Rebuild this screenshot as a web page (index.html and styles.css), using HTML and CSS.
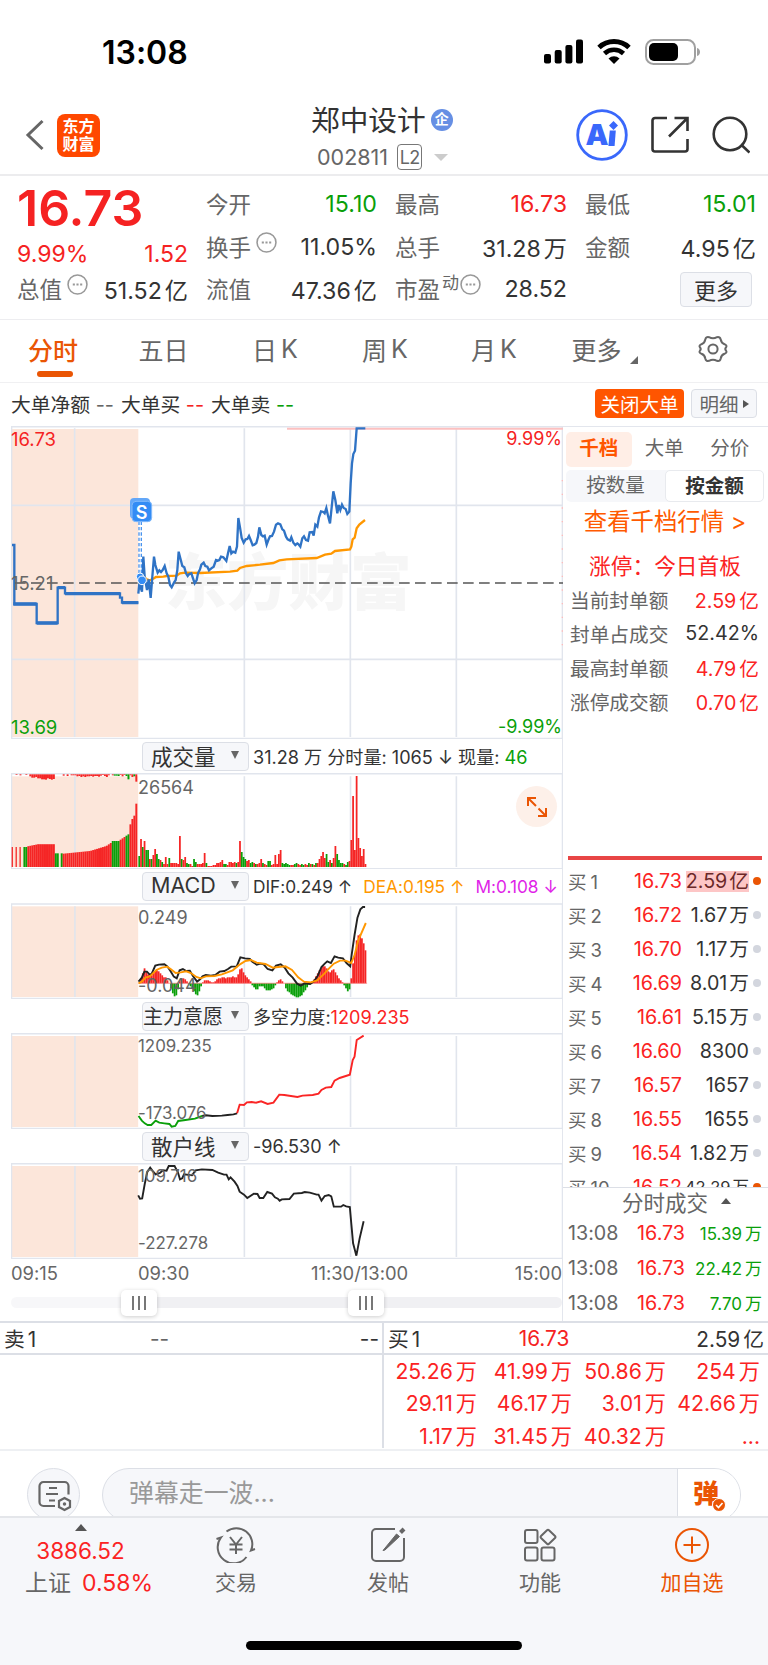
FILE: index.html
```
<!DOCTYPE html>
<html lang="zh-CN">
<head>
  <meta charset="UTF-8">
  <meta name="viewport" content="width=device-width, initial-scale=1.0">
  <title>郑中设计 002811</title>
  <link rel="stylesheet" href="styles.css">
</head>
<body>

  <div class="status-bar">
    <span class="time">13:08</span>
    <div class="status-icons">
      <svg width="39" height="25" viewBox="0 0 39 25">
        <rect x="0" y="15" width="7" height="9.5" rx="2"/>
        <rect x="10.7" y="11" width="7" height="13.5" rx="2"/>
        <rect x="21.4" y="6" width="7" height="18.5" rx="2"/>
        <rect x="32" y="0.5" width="7" height="24" rx="2"/>
      </svg>
      <svg class="wifi" width="34" height="25" viewBox="0 0 34 25">
        <path d="M2 8.5a22 22 0 0 1 30 0" fill="none" stroke="#000" stroke-width="5"/>
        <path d="M7.5 14.5a14 14 0 0 1 19 0" fill="none" stroke="#000" stroke-width="4.6"/>
        <path d="M11.5 19.5a8 8 0 0 1 11 0L17 25z"/>
      </svg>
      <svg width="56" height="26" viewBox="0 0 56 26">
        <rect x="1" y="1" width="49" height="24" rx="7.5" fill="none" stroke="#a0a0a0" stroke-width="2"/>
        <rect x="4" y="4" width="29" height="18" rx="5"/>
        <path d="M52 9c4 1 4 7 0 8z" fill="#a0a0a0"/>
      </svg>
    </div>
  </div>

  <header>
    <div class="header-left">
      <svg width="20" height="32" viewBox="0 0 20 32"><path d="M17.500 2L3 16l14.500 14" fill="none" stroke="#666" stroke-width="3"/></svg>
      <div class="logo">东方<br>财富</div>
    </div>
    <div class="stock">
      <div class="stock-name">郑中设计<span class="tag-qi">企</span></div>
      <div class="stock-code">002811<span class="tag-l2">L2</span><i class="tri-down"></i></div>
    </div>
    <div class="header-right">
      <svg width="52" height="52" viewBox="0 0 52 52">
        <circle cx="26" cy="26" r="24.300" fill="#fff" stroke="#3a68fb" stroke-width="2.800"/>
        <text x="9.500" y="36" class="ai-text">A</text>
        <path d="M33.800 21.500h6l-1.200 15.500h-6.200z" fill="#3a68fb"/>
        <path d="M37.500 12l4.500 4.500-4.500 4.500-4.500-4.500z" fill="#3a68fb"/>
      </svg>
      <svg width="38" height="38" viewBox="0 0 38 38" fill="none" stroke="#333" stroke-width="2.600">
        <path d="M16 2H4a2.500 2.500 0 0 0-2.500 2.500V33A2.500 2.500 0 0 0 4 35.500h30A2.500 2.500 0 0 0 36.500 33V23"/>
        <path d="M23.500 2h13v13M36 2.500L18 20.500"/>
      </svg>
      <svg width="38" height="38" viewBox="0 0 38 38" fill="none" stroke="#333" stroke-width="2.600">
        <circle cx="18" cy="18" r="16.300"/>
        <path d="M29 28.500l8.500 8"/>
      </svg>
    </div>
  </header>

  <section class="quote">
    <div class="price-col">
      <div class="price">16.73</div>
      <div class="change"><span>9.99%</span><span>1.52</span></div>
      <div class="item"><label>总值</label><svg class="more-dot" viewBox="0 0 20 20"><circle cx="10" cy="10" r="9"/><path d="M5.500 10h9"/></svg><b>51.52<u>亿</u></b></div>
    </div>
    <div class="quote-col">
      <div class="item"><label>今开</label><b class="green">15.10</b></div>
      <div class="item"><label>换手</label><svg class="more-dot" viewBox="0 0 20 20"><circle cx="10" cy="10" r="9"/><path d="M5.500 10h9"/></svg><b>11.05%</b></div>
      <div class="item"><label>流值</label><b>47.36<u>亿</u></b></div>
    </div>
    <div class="quote-col">
      <div class="item"><label>最高</label><b class="red">16.73</b></div>
      <div class="item"><label>总手</label><b>31.28<u>万</u></b></div>
      <div class="item"><label>市盈</label><span class="sup">动</span><svg class="more-dot tight" viewBox="0 0 20 20"><circle cx="10" cy="10" r="9"/><path d="M5.500 10h9"/></svg><b>28.52</b></div>
    </div>
    <div class="quote-col">
      <div class="item"><label>最低</label><b class="green">15.01</b></div>
      <div class="item"><label>金额</label><b>4.95<u>亿</u></b></div>
      <div class="item end"><button class="more-btn">更多</button></div>
    </div>
  </section>

  <nav class="tabs">
    <a class="active">分时</a>
    <a>五日</a>
    <a>日<em>K</em></a>
    <a>周<em>K</em></a>
    <a>月<em>K</em></a>
    <a>更多<i class="corner"></i></a>
    <a><svg width="30" height="28" viewBox="0 0 30 28" fill="none" stroke="#666" stroke-width="2">
      <path d="M11 2.200Q15 4.500 19 2.200Q22 1.500 22.700 4.500Q23.300 8 26.500 9.200Q29.500 10.500 28 12.500Q26.500 14 28 15.500Q29.500 17.500 26.500 18.800Q23.300 20 22.700 23.500Q22 26.500 19 25.800Q15 23.500 11 25.800Q8 26.500 7.300 23.500Q6.700 20 3.500 18.800Q.5 17.500 2 15.500Q3.500 14 2 12.500Q.5 10.500 3.500 9.200Q6.700 8 7.300 4.500Q8 1.500 11 2.200z"/>
      <circle cx="15" cy="14" r="4.600"/>
    </svg></a>
  </nav>

  <div class="big-order">
    <span>大单净额 <s class="grey">--</s></span>
    <span>大单买 <s class="red">--</s></span>
    <span>大单卖 <s class="green">--</s></span>
    <button class="close-btn">关闭大单</button>
    <button class="detail-btn">明细<i class="tri-right"></i></button>
  </div>

  <main>
    <div class="charts">

      <!-- price chart, viewBox is three units per pixel -->
      <div class="plot price-plot">
        <svg width="552" height="313" viewBox="33 18 1656 939">
          <rect x="33" y="27" width="382" height="924" fill="#fce6da"/>
          <text x="495" y="554" class="watermark">东方财富</text>
          <g class="grid">
            <path d="M224 25V951M733 25V951M1051 25V951M1369 25V951M33 256H1689M33 718H1689"/>
            <path d="M34.500 20V957M1687.500 20V957M33 20H1689M33 955.500H1689"/>
          </g>
          <path d="M861 26H1689" stroke="#fcc0c0" stroke-width="6"/>
          <path d="M45 489H1689" stroke="#555" stroke-width="5" stroke-dasharray="32 16"/>
          <path class="avg" d="M424 470L432 470L440 478L450 481L462 475L468 471L490 470L500 468L530 467L540 460L555 458L600 459L690 455L712 452L720 444L740 438L780 434L820 429L838 421L860 418L950 414L975 404L994 401L1005 393L1050 388L1054 380L1058 358L1064 353L1070 325L1078 314L1095 300"/>
          <path class="line" d="M36 375H43V490V552H110V609H173V503H195V520H360V533H366V548H415"/>
          <path class="steps" d="M40 552H110M110 609H173M173 503H195M195 521H360M366 548H415"/>
          <path class="line" d="M415 521L418 490L426 515L430 410L434 470L441 510L446 478L452 534L457 470L462 410L466 435L473 458L478 451L483 456L488 450L494 438L500 460L505 470L510 495L515 502L522 488L527 480L532 450L536 395L541 415L547 438L553 442L558 460L563 468L568 462L574 460L584 490L590 480L594 460L600 448L604 434L611 428L616 438L622 440L627 451L634 445L641 440L648 420L653 422L658 420L663 410L670 412L679 423L684 400L689 378L694 400L699 395L706 398L711 380L715 294L720 322L725 354L731 368L737 358L742 357L747 348L752 360L758 376L763 374L769 369L774 350L778 322L784 345L789 349L794 347L800 374L805 360L810 349L816 348L822 335L828 314L834 310L841 313L847 328L852 332L858 350L863 358L870 362L874 352L880 368L886 375L892 370L895 372L901 380L907 355L912 349L918 360L924 362L929 337L937 336L941 347L946 314L952 320L957 292L963 274L970 276L974 280L979 264L984 287L990 310L995 262L1000 214L1006 240L1012 280L1016 255L1021 270L1026 254L1031 264L1037 267L1042 282L1048 275L1052 190L1056 130L1060 102L1065 92L1070 25H1096"/>
          <path d="M417 305V460M424 305V470" stroke="#4a94ee" stroke-width="4" stroke-dasharray="10 6"/>
          <circle cx="420" cy="470" r="11" fill="#338cf5" stroke="#fff" stroke-width="3"/>
          <circle cx="426" cy="481" r="13" fill="#338cf5" stroke="#fff" stroke-width="3"/>
          <rect x="390" y="234" width="60" height="62" rx="12" fill="#63a7f8"/>
          <rect x="396" y="244" width="59" height="61" rx="12" fill="#338cf5" stroke="#84bbfa" stroke-width="3"/>
          <text x="425" y="296" class="s-mark">S</text>
          <path d="M1687 180V700" stroke="#fbb" stroke-width="4" stroke-dasharray="4 37"/>
        </svg>
        <span class="lb tl red">16.73</span>
        <span class="lb tr red">9.99%</span>
        <span class="lb ml">15.21</span>
        <span class="lb bl green">13.69</span>
        <span class="lb br green">-9.99%</span>
      </div>

      <div class="panel">
        <div class="panel-head"><button class="picker">成交量<i></i></button><span>31.28 万 分时量: 1065 ↓ 现量: <b class="green">46</b></span></div>
        <div class="plot">
          <svg id="volume" width="552" height="96" viewBox="30.250 114 1518 288" preserveAspectRatio="none">
            <rect x="30" y="124" width="350" height="272" fill="#fce6da"/>
            <path class="grid" d="M206 124V396M672 124V396M964 124V396M1255 124V396M31.500 117V401M1547 117V401M30 116H1549M30 401.500H1549"/>
          </svg>
          <span class="lb top">26564</span>
          <div class="expand"><svg width="22" height="22" viewBox="0 0 22 22"><path d="M2 10V2h8M2.500 2.500l7.500 7.500M20 12v8h-8M19.500 19.500L12.500 12.500"/></svg></div>
        </div>
      </div>

      <div class="panel">
        <div class="panel-head"><button class="picker">MACD<i></i></button><span class="macd">DIF:0.249 ↑<b class="orange">DEA:0.195 ↑</b><b class="purple">M:0.108 ↓</b></span></div>
        <div class="plot">
          <svg id="macd" width="552" height="96" viewBox="30.250 504 1518 288" preserveAspectRatio="none">
            <rect x="30" y="514" width="350" height="272" fill="#fce6da"/>
            <path class="grid" d="M206 514V786M672 514V786M964 514V786M1255 514V786M31.500 507V791M1547 507V791M30 507H1549M30 790.500H1549"/>
            <g class="bars"></g>
            <path class="thin" d="M381 740L390 728L397 710L404 710L411 718L417 717L427 692L437 689L452 688L460 694L470 710L478 725L486 730L494 706L503 702L512 708L522 707L531 724L542 740L551 732L557 724L566 720L580 722L592 720L604 710L617 708L627 702L636 695L651 694L661 667L674 670L687 672L694 680L706 689L716 686L725 688L736 702L749 706L759 692L772 688L783 698L793 715L805 728L817 746L827 752L838 745L853 747L864 738L874 722L884 696L893 686L900 679L910 684L920 664L930 668L943 670L953 684L963 694L967 660L975 600L983 548L991 523L998 516L1004 516"/>
            <path class="thin avg" d="M381 745L390 740L400 728L412 724L430 705L445 698L460 695L470 703L483 714L497 712L512 709L525 714L540 726L552 730L566 724L590 723L610 718L640 706L660 688L675 678L690 675L706 683L730 687L750 698L765 696L785 694L803 705L820 727L836 740L855 742L872 736L890 718L905 700L918 686L935 677L950 677L966 684L975 660L985 617L1006 564"/>
          </svg>
          <span class="lb top">0.249</span>
          <span class="lb bottom low">-0.044</span>
        </div>
      </div>

      <div class="panel">
        <div class="panel-head"><button class="picker wide">主力意愿<i></i></button><span>多空力度:<b class="bright">1209.235</b></span></div>
        <div class="plot small">
          <svg width="552" height="96" viewBox="30.250 129 1518 288" preserveAspectRatio="none">
            <rect x="30" y="138" width="350" height="273" fill="#fce6da"/>
            <path class="grid" d="M206 138V411M672 138V411M964 138V411M1255 138V411M31.500 131V415M1547 131V415M30 131H1549M30 415.500H1549"/>
            <path class="thin green-line" d="M381 378L390 392L398 400L406 405L416 405L428 392L438 398L452 400L466 402L472 410L482 408L490 393L510 390L536 386L556 378"/>
            <path class="thin" d="M556 378L566 376L584 378L610 377L626 375L642 373L652 370"/>
            <path class="thin red-line" d="M652 370L659 344L671 345L679 337L692 336L704 338L718 334L736 342L752 338L768 314L782 315L818 321L832 317L860 315L876 311L884 300L896 293L911 291L920 272L934 264L951 258L962 254L970 210L975 200L981 150L1000 137"/>
          </svg>
          <span class="lb top">1209.235</span>
          <span class="lb bottom">-173.076</span>
        </div>
      </div>

      <div class="panel">
        <div class="panel-head"><button class="picker">散户线<i></i></button><span>-96.530 ↑</span></div>
        <div class="plot small">
          <svg width="552" height="96" viewBox="30.250 519 1518 288" preserveAspectRatio="none">
            <rect x="30" y="528" width="350" height="273" fill="#fce6da"/>
            <path class="grid" d="M206 528V801M672 528V801M964 528V801M1255 528V801M31.500 521V805M1547 521V805M30 521H1549M30 805.500H1549"/>
            <path class="thin" d="M380 616L385 626L391 625L398 582L405 546L413 533L419 542L428 553L440 549L448 541L458 542L464 528L480 528L489 546L495 568L501 565L506 553L528 556L538 541L555 538L584 540L600 548L616 554L623 554L629 568L634 562L645 575L653 588L659 605L671 614L680 624L698 611L708 612L714 624L724 624L735 606L748 611L756 622L764 626L769 632L775 628L796 627L808 611L830 609L838 606L852 608L871 614L876 614L884 632L893 618L904 615L911 619L918 650L938 650L944 645L952 649L962 651L966 700L971 760L980 797L989 745L1000 694"/>
          </svg>
          <span class="lb top">109.716</span>
          <span class="lb bottom">-227.278</span>
        </div>
      </div>

      <div class="axis"><span>09:15</span><span>09:30</span><span>11:30/13:00</span><span>15:00</span></div>
      <div class="slider">
        <div class="knob first"><i></i><i></i><i></i></div>
        <div class="knob second"><i></i><i></i><i></i></div>
      </div>
    </div>

    <aside>
      <div class="side-tabs"><span class="active">千档</span><span>大单</span><span>分价</span></div>
      <div class="segment"><span>按数量</span><span class="active">按金额</span></div>
      <a class="depth-link">查看千档行情 &gt;</a>
      <div class="limit-title">涨停：今日首板</div>
      <div class="limit-row"><span>当前封单额</span><b class="bright">2.59<u>亿</u></b></div>
      <div class="limit-row"><span>封单占成交</span><b>52.42%</b></div>
      <div class="limit-row"><span>最高封单额</span><b class="bright">4.79<u>亿</u></b></div>
      <div class="limit-row"><span>涨停成交额</span><b class="bright">0.70<u>亿</u></b></div>

      <div class="orders">
        <div class="order"><span>买<u>1</u></span><b>16.73</b><em class="hot">2.59<u>亿</u></em><i class="on"></i></div>
        <div class="order"><span>买<u>2</u></span><b>16.72</b><em>1.67<u>万</u></em><i></i></div>
        <div class="order"><span>买<u>3</u></span><b>16.70</b><em>1.17<u>万</u></em><i></i></div>
        <div class="order"><span>买<u>4</u></span><b>16.69</b><em>8.01<u>万</u></em><i></i></div>
        <div class="order"><span>买<u>5</u></span><b>16.61</b><em>5.15<u>万</u></em><i></i></div>
        <div class="order"><span>买<u>6</u></span><b>16.60</b><em>8300</em><i></i></div>
        <div class="order"><span>买<u>7</u></span><b>16.57</b><em>1657</em><i></i></div>
        <div class="order"><span>买<u>8</u></span><b>16.55</b><em>1655</em><i></i></div>
        <div class="order"><span>买<u>9</u></span><b>16.54</b><em>1.82<u>万</u></em><i></i></div>
        <div class="order"><span>买<u>10</u></span><b>16.52</b><em class="narrow">42.29<u>万</u></em><i class="on"></i></div>
      </div>

      <div class="trades">
        <div class="trades-title">分时成交<i class="tri-up"></i></div>
        <div class="trade"><span>13:08</span><b>16.73</b><em>15.39<u>万</u></em></div>
        <div class="trade"><span>13:08</span><b>16.73</b><em>22.42<u>万</u></em></div>
        <div class="trade"><span>13:08</span><b>16.73</b><em>7.70<u>万</u></em></div>
      </div>
    </aside>
  </main>

  <section class="queue">
    <div class="queue-side">
      <div class="queue-head"><span>卖<u>1</u></span><span class="grey">--</span><span>--</span></div>
    </div>
    <div class="queue-side buy">
      <div class="queue-head"><span>买<u>1</u></span><span class="red">16.73</span><span>2.59<u>亿</u></span></div>
      <div class="queue-grid">
        <span>25.26<u>万</u></span><span>41.99<u>万</u></span><span>50.86<u>万</u></span><span>254<u>万</u></span>
        <span>29.11<u>万</u></span><span>46.17<u>万</u></span><span>3.01<u>万</u></span><span>42.66<u>万</u></span>
        <span>1.17<u>万</u></span><span>31.45<u>万</u></span><span>40.32<u>万</u></span><span>...</span>
      </div>
    </div>
  </section>

  <section class="danmu">
    <div class="danmu-set">
      <svg width="34" height="32" viewBox="0 0 34 32" fill="none" stroke="#666" stroke-width="2.200">
        <path d="M17 26H5.500A4 4 0 0 1 1.500 22V6A4 4 0 0 1 5.500 2H26.500A4 4 0 0 1 30.500 6V14.500"/>
        <path d="M11 8h8M8 14h12M11 20.500h6"/>
        <path d="M26.500 18l5.500 3v6l-5.500 3-5.500-3v-6z"/>
        <circle cx="26.500" cy="24" r="1" fill="#666" stroke-width="1.500"/>
      </svg>
    </div>
    <div class="danmu-input">
      <span>弹幕走一波...</span>
      <div class="danmu-on">弹<svg width="14" height="14" viewBox="0 0 14 14"><circle cx="7" cy="7" r="6.500" fill="#ea5504" stroke="#fff"/><path d="M4 7l2.500 2.500 4-4.500" fill="none" stroke="#fff" stroke-width="1.600"/></svg></div>
    </div>
  </section>

  <footer>
    <div class="index">
      <i class="tri-up"></i>
      <div class="index-value">3886.52</div>
      <div class="index-change">上证<b class="bright">0.58%</b></div>
    </div>
    <div class="foot-item">
      <svg width="40" height="36" viewBox="0 0 40 36" fill="none" stroke="#666" stroke-width="2">
        <path d="M10.500 4.500A16 16 0 0 1 35 23.500L39 22M30.500 30A16 16 0 0 1 5 10.500L0.500 12"/>
        <path d="M14 10l6 7.500L26 10M20 17.500V27M13.500 17.500h13M13.500 22.500h13"/>
      </svg>
      <span>交易</span>
    </div>
    <div class="foot-item">
      <svg width="36" height="36" viewBox="0 0 36 36" fill="none" stroke="#666" stroke-width="2">
        <path d="M25 2H6A4 4 0 0 0 2 6v24a4 4 0 0 0 4 4h24a4 4 0 0 0 4-4V11"/>
        <path d="M13 23.500L26.500 7l3 2.500L15 23z" fill="#666" stroke-width="1"/>
        <path d="M30.500 5.500L34 2" stroke-width="4"/>
      </svg>
      <span>发帖</span>
    </div>
    <div class="foot-item">
      <svg width="34" height="36" viewBox="0 0 34 36" fill="none" stroke="#666" stroke-width="2">
        <rect x="2" y="3" width="12.500" height="13" rx="2"/>
        <rect x="2" y="20.500" width="12.500" height="13" rx="2"/>
        <rect x="18.500" y="20.500" width="13" height="13" rx="2"/>
        <path d="M24 3.200q1-1 2 0l6 5.800q1 1 0 2l-6 5.800q-1 1-2 0l-6-5.800q-1-1 0-2z"/>
      </svg>
      <span>功能</span>
    </div>
    <div class="foot-item add">
      <svg width="36" height="36" viewBox="0 0 36 36" fill="none" stroke="#ea5504" stroke-width="2">
        <circle cx="18" cy="18" r="16"/>
        <path d="M18 9.500v17M9.500 18h17"/>
      </svg>
      <span>加自选</span>
    </div>
    <div class="home-bar"></div>
  </footer>

  <script src="charts.js"></script>
</body>
</html>
```

FILE: styles.css
```
* {
  box-sizing: border-box;
}

body {
  font-family: Inter, "Noto Sans CJK SC", sans-serif;
  margin: 0;
  width: 768px;
  height: 1665px;
  overflow: hidden;
  background-color: #fff;
  color: #333;
  font-feature-settings: "calt" 0;
}

svg {
  display: block;
  flex: none;
}

b, em, u, s, i {
  font-weight: normal;
  font-style: normal;
  text-decoration: none;
}

button {
  font-family: inherit;
  padding: 0;
  margin: 0;
}

u {
  margin-left: 3px;
}

.red {
  color: #f52222;
}

.green {
  color: #0a9f0a;
}

.bright {
  color: #fb2323;
}

.orange {
  color: #ff9700;
}

.purple {
  color: #e01fe8;
}

.grey {
  color: #666;
}

/* Status bar */
.status-bar {
  height: 96px;
  padding: 33px 67px 0 102px;
  display: flex;
  justify-content: space-between;
  color: #000;
}

.time {
  font-size: 32px;
  font-weight: 600;
  line-height: 40px;
}

.status-icons {
  display: flex;
  gap: 14px;
  padding-top: 6px;
}

/* Header */
header {
  height: 80px;
  display: grid;
  grid-template-columns: 250px 1fr 250px;
  border-bottom: 2px solid #ececee;
}

.header-left {
  display: flex;
  align-items: center;
  padding-left: 25px;
  gap: 12px;
}

.logo {
  width: 43px;
  height: 43px;
  border-radius: 8px;
  background-color: #ff4800;
  color: #fff;
  font-size: 16px;
  font-weight: 700;
  line-height: 18px;
  padding-top: 3px;
  text-align: center;
}

.stock {
  padding-left: 61px;
}

.stock-name {
  display: flex;
  align-items: center;
  height: 48px;
  padding-bottom: 3px;
  font-size: 28.700px;
}

.tag-qi {
  width: 22px;
  height: 22px;
  margin: 3px 0 0 5px;
  border-radius: 50%;
  background-color: #668fe4;
  color: #fff;
  font-size: 14px;
  font-weight: 700;
  line-height: 20px;
  text-align: center;
}

.stock-code {
  display: flex;
  align-items: center;
  height: 26px;
  padding-left: 6px;
  font-size: 21.500px;
  color: #666;
}

.tag-l2 {
  width: 25px;
  height: 26px;
  margin-left: 9px;
  border: 1px solid #777;
  border-radius: 4px;
  font-size: 18px;
  line-height: 25px;
  letter-spacing: -0.800px;
  text-align: center;
}

.tri-down {
  margin-left: 12px;
  border: 7px solid transparent;
  border-top-color: #ccc;
  border-bottom: 0;
}

.header-right {
  display: flex;
  align-items: center;
  gap: 23px;
  padding-left: 58px;
}

.ai-text {
  font-size: 29px;
  font-weight: 900;
  fill: #3a68fb;
}

/* Quote */
.quote {
  height: 144px;
  padding: 7px 12px 0 17px;
  display: grid;
  grid-template-columns: 171px 171px 172px 171px;
  gap: 18px;
  border-bottom: 1px solid #ededf0;
}

.price {
  height: 49px;
  font-size: 50px;
  font-weight: 600;
  line-height: 50px;
  color: #f52222;
}

.change {
  display: flex;
  justify-content: space-between;
  height: 36px;
  font-size: 23px;
  line-height: 44px;
  color: #f52222;
}

.item {
  display: flex;
  align-items: center;
  height: 42.500px;
  font-size: 23.200px;
}

.item label {
  color: #666;
  font-size: 22.500px;
  padding-bottom: 2px;
}

.item b {
  margin-left: auto;
}

.item.end {
  justify-content: flex-end;
  padding-right: 4px;
}

.more-dot {
  width: 21px;
  height: 21px;
  margin: -9px 0 0 5px;
  fill: none;
  stroke: #999;
  stroke-width: 1.500;
}

.more-dot path {
  stroke-width: 2;
  stroke-dasharray: 2 1.500;
}

.more-dot.tight {
  margin-left: 1px;
}

.sup {
  font-size: 17px;
  margin: -16px 0 0 2px;
  color: #666;
}

.more-btn {
  width: 72px;
  height: 35px;
  padding-bottom: 2px;
  font-size: 22px;
  color: #333;
  background-color: #f6f7fa;
  border: 1px solid #dcdfe6;
  border-radius: 4px;
}

/* Period tabs */
.tabs {
  height: 63px;
  display: grid;
  grid-template-columns: 109px 109px 114px 106px 112px 109px 1fr;
  border-bottom: 1px solid #f0f0f2;
}

.tabs a {
  display: flex;
  justify-content: center;
  align-items: center;
  position: relative;
  padding-bottom: 4px;
  font-size: 25px;
  color: #666;
}

.tabs em {
  margin-left: 4px;
}

.tabs .active {
  color: #ea5504;
  font-weight: 500;
}

.tabs .active::after {
  content: "";
  position: absolute;
  left: 37px;
  bottom: 5px;
  width: 36px;
  height: 6px;
  border-radius: 3px;
  background-color: #ea5504;
}

.corner {
  align-self: flex-end;
  margin: 0 0 14px 8px;
  border-left: 8px solid transparent;
  border-bottom: 8px solid #666;
}

.tabs a:first-child {
  justify-content: flex-start;
  padding-left: 28px;
}

.tabs a:last-child {
  padding-right: 2px;
}

/* Big order row */
.big-order {
  height: 43px;
  display: flex;
  align-items: center;
  gap: 7px;
  padding: 0 11px 2px;
  font-size: 19.800px;
}

.close-btn {
  width: 89px;
  height: 29px;
  margin-left: auto;
  padding-bottom: 2px;
  border: 0;
  border-radius: 4px;
  background-color: #ff5500;
  color: #fff;
  font-size: 19.500px;
}

.detail-btn {
  width: 66px;
  height: 29px;
  display: flex;
  align-items: center;
  justify-content: center;
  border: 1px solid #dcdfe6;
  border-radius: 4px;
  background-color: #f6f7fa;
  color: #666;
  font-size: 19.500px;
}

.tri-right {
  margin-left: 4px;
  border: 4px solid transparent;
  border-left: 6px solid #555;
  border-right: 0;
}

/* Charts */
main {
  display: grid;
  grid-template-columns: 563px 205px;
  height: 895px;
}

.charts {
  padding-left: 11px;
  border-right: 1px solid #e3e6ed;
}

.plot {
  position: relative;
  width: 552px;
}

.grid {
  fill: none;
  stroke: #e1e5ed;
  stroke-width: 5;
}

.watermark {
  font-size: 185px;
  font-weight: 900;
  fill: #f6f6f6;
}

.line {
  fill: none;
  stroke: #2f73c5;
  stroke-width: 7;
}

.steps {
  fill: none;
  stroke: #2f73c5;
  stroke-width: 10;
}

.avg {
  fill: none;
  stroke: #ff9700;
  stroke-width: 7;
}

.s-mark {
  font-size: 54px;
  font-weight: 600;
  fill: #fff;
  text-anchor: middle;
}

.panel path {
  vector-effect: non-scaling-stroke;
}

.panel .grid {
  stroke-width: 1.600px;
}

.thin {
  fill: none;
  stroke: #222;
  stroke-width: 1.900px;
}

.thin.avg {
  stroke: #ff9700;
}

.red-line {
  stroke: #fa2525;
}

.green-line {
  stroke: #0a9f0a;
}

.lb {
  position: absolute;
  left: 127px;
  font-size: 18px;
  line-height: 22px;
  color: #666;
}

.lb.red {
  color: #f52222;
}

.lb.green {
  color: #0a9f0a;
}

.tl,
.ml,
.bl {
  left: 0;
  font-size: 18.500px;
}

.tl {
  top: 2px;
}

.tr {
  left: auto;
  right: 1px;
  top: 2px;
}

.ml {
  top: 146px;
}

.bl {
  top: 290px;
}

.br {
  left: auto;
  right: 1px;
  top: 290px;
}

.top {
  top: 4px;
}

.bottom {
  bottom: 5px;
}

.low {
  bottom: 2px;
}

.small .lb {
  font-size: 16.900px;
}

.small .top {
  top: 2px;
}

.panel {
  height: 130px;
}

.panel-head {
  height: 34px;
  display: flex;
  align-items: center;
  gap: 4px;
  padding: 0 0 0 131px;
  font-size: 18.100px;
  white-space: nowrap;
}

.picker {
  width: 107px;
  height: 29px;
  display: flex;
  align-items: center;
  justify-content: space-between;
  padding: 0 9px 2px 8px;
  border: 1px solid #dcdfe6;
  border-radius: 4px;
  background-color: #f6f7fa;
  color: #333;
  font-size: 21.500px;
}

.picker.wide {
  padding-left: 0;
  font-size: 20px;
}

.picker i {
  border: 4.500px solid transparent;
  border-top: 8px solid #666;
  border-bottom: 0;
}

.macd {
  display: flex;
  gap: 11px;
  font-size: 17.300px;
}

.expand {
  position: absolute;
  right: 6px;
  top: 13px;
  width: 41px;
  height: 41px;
  padding: 10px;
  border-radius: 50%;
  background-color: #fdf0e9;
}

.expand svg {
  fill: none;
  stroke: #ea5504;
  stroke-width: 2;
}

.axis {
  height: 30px;
  display: grid;
  grid-template-columns: 127px 173px 1fr auto;
  font-size: 18.400px;
  line-height: 28px;
  color: #666;
}

.slider {
  position: relative;
  height: 11px;
  margin-top: 8px;
  border-radius: 6px;
  background: linear-gradient(to right, #f7f7f9 110px, #f0f0f3 140px);
}

.knob {
  position: absolute;
  top: -7px;
  width: 36px;
  height: 26px;
  display: flex;
  align-items: center;
  justify-content: center;
  gap: 4px;
  border-radius: 5px;
  background-color: #fff;
  box-shadow: 0 1px 4px rgba(0, 0, 0, 0.2);
}

.knob i {
  width: 2px;
  height: 14px;
  background-color: #777;
}

.knob.first {
  left: 110px;
}

.knob.second {
  left: 337px;
}

/* Right side */
aside {
  height: 895px;
  display: flex;
  flex-direction: column;
  padding: 5px 4px 0 3px;
  border-top: 1px solid #e3e6ed;
}

.side-tabs {
  display: flex;
  height: 35px;
  flex: none;
  font-size: 19.500px;
  line-height: 32px;
  text-align: center;
  color: #666;
}

.side-tabs span {
  width: 65.500px;
}

.side-tabs .active {
  color: #ff5500;
  font-weight: 600;
  border-radius: 5px;
  background-color: #ffeee6;
}

.segment {
  display: flex;
  flex: none;
  height: 32px;
  margin-top: 3px;
  border-radius: 5px;
  background-color: #f6f7fa;
  font-size: 19.500px;
  line-height: 30px;
  text-align: center;
  color: #666;
}

.segment span {
  width: 99px;
}

.segment .active {
  color: #333;
  font-weight: 600;
  border: 1px solid #e8eaee;
  border-radius: 5px;
  background-color: #fff;
}

.depth-link {
  flex: none;
  height: 42px;
  font-size: 23.400px;
  line-height: 40px;
  text-align: center;
  color: #ff5a00;
  white-space: nowrap;
}

.limit-title {
  flex: none;
  height: 40px;
  font-size: 21.700px;
  line-height: 44px;
  text-align: center;
  color: #fb2323;
}

.limit-row {
  display: flex;
  align-items: center;
  justify-content: space-between;
  flex: none;
  height: 34px;
  padding: 0 5px 4px 4px;
  font-size: 19.700px;
}

.limit-row span {
  color: #666;
}

.orders {
  margin: 136px 0 0 2px;
  width: 194px;
  height: 331px;
  flex: none;
  padding-top: 4px;
  overflow: hidden;
  border-top: 4px solid #e84545;
}

.order {
  display: grid;
  grid-template-columns: 50px 64px 67px 8px;
  align-items: center;
  height: 34px;
  font-size: 19.700px;
  text-align: right;
}

.order span {
  font-size: 18.500px;
  text-align: left;
  white-space: nowrap;
  color: #666;
}

.order span u {
  margin-left: 4px;
}

.order b {
  color: #fb2323;
}

.order em {
  justify-self: end;
  line-height: 21px;
  white-space: nowrap;
}

.order em u {
  margin-left: 2px;
}

.order .narrow {
  font-size: 16.500px;
}

.order .hot {
  background-color: #fdc6c6;
  color: #6a2828;
}

.order i {
  width: 8px;
  height: 8px;
  margin-left: 4px;
  border-radius: 50%;
  background-color: #d3d6de;
}

.order .on {
  background-color: #ea5504;
}

.trades {
  margin: 0 -4px 0 -3px;
  padding: 0 6px 0 5px;
  border-top: 1px solid #dcdfe6;
}

.trades-title {
  display: flex;
  align-items: center;
  height: 29px;
  padding: 0 0 3px 54px;
  font-size: 21.500px;
  color: #666;
}

.tri-up {
  margin-left: 13px;
  border: 5px solid transparent;
  border-bottom: 6px solid #555;
  border-top: 0;
}

.trade {
  display: grid;
  grid-template-columns: 60px 57px 1fr;
  align-items: center;
  height: 35px;
  padding-bottom: 4px;
  font-size: 19.700px;
  text-align: right;
}

.trade span {
  text-align: left;
  color: #666;
}

.trade b {
  color: #fb2323;
}

.trade em {
  font-size: 17px;
  color: #0a9f0a;
}

/* Order queue */
.queue {
  display: grid;
  grid-template-columns: 384px 384px;
  height: 130px;
  border-top: 2px solid #dcdfe6;
  border-bottom: 2px solid #eef0f3;
}

.queue-side {
  height: 125px;
  border-right: 2px solid #dcdfe6;
}

.queue-side.buy {
  border-right: 0;
}

.queue-head {
  display: grid;
  grid-template-columns: 95px 122px 1fr;
  align-items: center;
  height: 32px;
  padding: 0 4px;
  font-size: 20.800px;
  border-bottom: 2px solid #dcdfe6;
}

.queue-head span:nth-child(2) {
  text-align: center;
}

.queue-head span:nth-child(3) {
  text-align: right;
}

.queue-side:first-child .queue-head {
  grid-template-columns: 146px 1fr 1fr;
  padding: 0 3px 0 4px;
}

.queue-side:first-child .queue-head span:nth-child(2) {
  text-align: left;
}

.queue-grid {
  display: grid;
  grid-template-columns: 93px 95px 94px 94px;
  font-size: 21.200px;
  line-height: 32.400px;
  text-align: right;
  color: #fb2323;
}

/* Comment bar */
.danmu {
  display: flex;
  gap: 22px;
  height: 65px;
  padding: 17px 27px 0;
  overflow: hidden;
}

.danmu-set {
  flex: none;
  width: 53px;
  height: 53px;
  padding: 11px 0 0 10px;
  border: 1px solid #dcdfe6;
  border-radius: 50%;
  background-color: #f6f7fa;
}

.danmu-input {
  flex: none;
  display: flex;
  justify-content: space-between;
  width: 639px;
  height: 54px;
  padding-left: 26px;
  overflow: hidden;
  border: 1px solid #dcdfe6;
  border-radius: 27px;
  background-color: #f6f7fa;
  font-size: 24.900px;
  line-height: 48px;
  color: #999;
}

.danmu-on {
  position: relative;
  width: 63px;
  padding-left: 15px;
  border-left: 1px solid #dcdfe6;
  background-color: #fff;
  color: #ea5504;
  font-size: 26px;
  font-weight: 900;
  line-height: 50px;
}

.danmu-on svg {
  position: absolute;
  left: 34px;
  top: 29px;
}

/* Footer */
footer {
  position: relative;
  display: grid;
  grid-template-columns: 160px 152px 152px 152px 152px;
  height: 149px;
  border-top: 2px solid #e4e6ea;
  background-color: #f6f7fa;
  color: #666;
  font-size: 21px;
}

.index {
  padding: 6px 0 0 14px;
  width: 147px;
  font-size: 22.500px;
  line-height: 32px;
  text-align: center;
  white-space: nowrap;
}

.index .tri-up {
  display: block;
  width: 0;
  margin: 0 auto;
  border-width: 0 6px 7px;
}

.index-value {
  color: #fb2323;
  padding-top: 4px;
}

.index-change {
  display: flex;
  gap: 11px;
  padding-left: 11px;
  font-size: 23px;
}

.foot-item {
  display: flex;
  flex-direction: column;
  align-items: center;
  gap: 4px;
  padding-top: 9px;
}

.foot-item span {
  line-height: 32px;
}

.add {
  color: #ea5504;
}

.home-bar {
  position: absolute;
  left: 246px;
  bottom: 15px;
  width: 276px;
  height: 9px;
  border-radius: 5px;
  background-color: #000;
}
```

FILE: charts.js
```
const NS = 'http://www.w3.org/2000/svg';
const RED = '#f52525';
const GREEN = '#0a9f0a';
const STEP = 4.86; // one minute

function bar(parent, x, y, w, h, color) {
  const r = document.createElementNS(NS, 'rect');
  r.setAttribute('x', x);
  r.setAttribute('y', y);
  r.setAttribute('width', w);
  r.setAttribute('height', h);
  r.setAttribute('fill', color);
  parent.appendChild(r);
}

// Minute volume, negative means the price fell
const volume = [-11, 28, -20, 26, -17, -17, 8, -8, 12, 18, -13, -8, 7, -5, 3, 10, 3, -9, 4, 4, 4, 4, 3, 31, -8, 7, 10, -4, -3, 3, 1,
  -8, -5, 3, 3, 3, 4, 14, -4, 1, 1, 1, 2, 2, 4, 4, 5, 7, -3, -3, 2, 5, 5, 4, 5, -4, 5, 26, -15, -10, -8, 6, 7, -4, -5, 4, -3, 3, 4,
  8, -4, 3, 2, -6, -6, 2, 3, 12, 3, 13, 17, -4, -3, -4, -3, -2, 2, 2, -3, -4, 3, 2, -3, -2, 3, 2, -4, 3, -3, 2, -4, 4, 8, 11, 15, 9, -13,
  -5, 7, -4, 9, 21, -13, -7, -4, -4, 3, -2, -5, 6, 27, 71, 17, 91, 29, 19, 11, 18, 3];

const volumeSvg = document.getElementById('volume');
volume.forEach((v, i) => {
  const h = Math.abs(v) * 3;
  bar(volumeSvg, 380.5 + i * STEP, 396 - h, 4.86, h, v < 0 ? GREEN : RED);
});

// Call auction, 5.4 units a bar
for (let i = 0; i < 64; i++) {
  const x = 32 + i * 5.4;
  let h = 60;
  let color = RED;
  if (i < 6 && i % 2) continue;
  if (i >= 6 && i < 8) color = GREEN;
  if (i >= 8 && i < 22) h = 60 + Math.min(i - 6, 7) * 1.2;
  if (i >= 22 && i < 26) { h = 41; color = i === 24 ? null : GREEN; }
  if (i >= 26) h = 40 + (i - 26) * 0.6;
  if (i >= 40) h = 49 + (i - 40) * 1.8;
  if (i >= 48) h = 64 + (i - 48) * 4;
  if (i >= 51 && i < 55) { h = 78; color = GREEN; }
  if (i >= 55) h = 82 + (i - 55) * 4;
  if (i >= 58) color = GREEN;
  if (i >= 60) { h = [128, 144, 154, 190][i - 60]; color = RED; }
  if (color) bar(volumeSvg, x, 396 - h, i < 6 ? 3.5 : 5.4, h, color);
}

// Unmatched auction volume hangs from the top
const hang = [0, 0, 2, 0, 3, 0, 0, 2, 0, 6, 10, 10, 8, 12, 12, 15, 15, 16, 12, 14, 16, 14, 0, 0, 0, 0, 4, 0, 5, 0, 3, 3, 3, 6, 5, 8,
  6, 8, 6, 6, 5, 7, 5, 5, 7, 4, 2, 5, 8, 3, 0, 3, -4, -4, -5, 2, 6, 2, -5, -15, 3, 8, -6, 22];
hang.forEach((v, i) => {
  if (v) bar(volumeSvg, 32 + i * 5.4, 118, 5.4, Math.abs(v), v < 0 ? GREEN : RED);
});

const macd = [0, 5, 10, 15, 12, 9, 8, 8, 10, 12, 13, 12, 10, 8, 6, 6, 3, 0, -5, -10, -13, -12, -6, 2, 5, 5, 4, 2, -1, -3, -5, -8,
  -11, -12, -8, -3, 1, 3, 3, 3, 2, 1, 1, 2, 4, 5, 5, 6, 6, 5, 6, 6, 6, 7, 6, 6, 9, 14, 15, 11, 8, 6, 4, 2, -2, -4, -6, -6, -3, -3, -3, -5,
  -7, -7, -7, -6, -5, -2, 1, 3, 4, 2, 0, -5, -8, -9, -11, -12, -13, -14, -14, -13, -12, -9, -7, -4, -1, 1, 2, 4, 7, 10, 13, 15, 17, 17, 15,
  12, 11, 13, 14, 11, 8, 5, 3, 1, -2, -5, -8, -6, 5, 20, 30, 43, 48, 49, 45, 40, 33];
const macdBars = document.querySelector('#macd .bars');
macd.forEach((v, i) => {
  const h = Math.abs(v) * 3;
  bar(macdBars, 380.5 + i * STEP, v > 0 ? 745 - h : 745, 4.86, h, v < 0 ? GREEN : RED);
});
bar(macdBars, 380.5, 743.5, 629, 2, '#f57070');
```
